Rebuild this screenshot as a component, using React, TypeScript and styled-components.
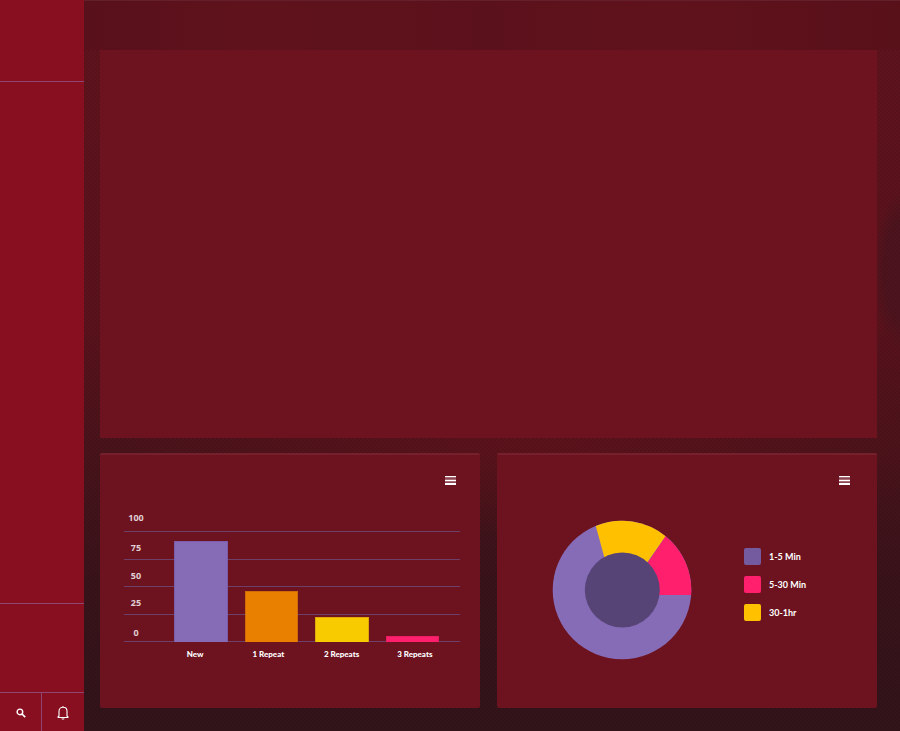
import React from "react";
import styled, { createGlobalStyle } from "styled-components";

const GlobalStyle = createGlobalStyle`
  * { box-sizing: border-box; }
  body {
    margin: 0;
    background: #2c1015;
    color: #fff;
    font-family: Lato, "Open Sans", sans-serif;
  }
`;

const Page = styled.div`
  display: grid;
  grid-template-columns: 84px 1fr;
  min-height: 100vh;
`;

const Sidebar = styled.aside`
  display: flex;
  flex-direction: column;
  background: #870f20;
`;

const Brand = styled.div`
  height: 82px;
  border-bottom: 1px solid #904672;
`;

const Nav = styled.nav`
  flex: 1;
`;

const Account = styled.div`
  height: 89px;
  border-top: 1px solid #904672;
`;

const Tools = styled.div`
  display: grid;
  grid-template-columns: 1fr 1fr;
  height: 39px;
  border-top: 1px solid #904672;
`;

const ToolButton = styled.button`
  display: flex;
  align-items: center;
  justify-content: center;
  padding: 2px 0 0;
  border: 0;
  background: none;
  color: #fff;
  cursor: pointer;

  &:first-child {
    border-right: 1px solid #904672;
  }
`;

const Main = styled.main`
  display: flex;
  flex-direction: column;
  min-width: 0;
  background:
    repeating-conic-gradient(rgba(0, 0, 0, 0.07) 0 25%, transparent 0 50%) 0 0 / 4px 4px,
    radial-gradient(ellipse 26px 80px at 100% 37%, rgba(76, 20, 30, 0.9) 60%, transparent),
    radial-gradient(ellipse 420px 90px at 56% 61%, rgba(98, 18, 27, 0.8), transparent),
    linear-gradient(#60131d 0%, #5a121c 45%, #4a131b 61%, #39131a 80%, #32141a 100%);
`;

const Header = styled.header`
  height: 50px;
  border-top: 1px solid #64202a;
  background: linear-gradient(90deg, #58101a, #5f121c 20%, #5b111b 50%, #60121c 72%, #581019);
`;

const Content = styled.div`
  flex: 1;
  display: flex;
  flex-direction: column;
  gap: 15px;
  padding: 0 23px 23px 16px;
`;

const Panel = styled.section`
  flex: 1;
  min-height: 200px;
  background: #6d1320;
`;

const Cards = styled.div`
  display: grid;
  grid-template-columns: 1fr 1fr;
  gap: 17px;
`;

const Card = styled.section`
  display: flex;
  flex-direction: column;
  min-height: 255px;
  border-top: 2px solid #76202e;
  border-radius: 2px;
  background: #6d1320;
`;

const CardHeader = styled.header<{ $inset: number }>`
  display: flex;
  justify-content: flex-end;
  padding: 21px ${(p) => p.$inset}px 0 0;
`;

const MenuButton = styled.button`
  display: flex;
  padding: 0;
  border: 0;
  background: none;
  color: #fff;
  cursor: pointer;
`;

const BarChart = styled.figure`
  display: grid;
  margin: 26px 20px 0 24px;
`;

const Scale = styled.ol`
  grid-area: 1 / 1;
  margin: 0;
  padding: 0;
  list-style: none;
`;

const ScaleRow = styled.li`
  display: flex;
  align-items: flex-start;
  height: 28px;
  padding-top: 10px;
  border-bottom: 1px solid #6c4068;
  color: #e0cfd4;
  font: 700 9px/12px "Noto Sans", sans-serif;

  &:first-child {
    height: 20px;
    padding-top: 0;
  }
  &:nth-child(odd):not(:first-child) {
    height: 27px;
  }
  &:last-child {
    padding-top: 12px;
  }
`;

const ScaleValue = styled.span`
  width: 24px;
  text-align: center;
`;

const Bars = styled.div`
  grid-area: 1 / 1;
  display: grid;
  grid-template-columns: repeat(4, 1fr);
  column-gap: 17px;
  align-items: end;
  padding: 0 21px 0 50px;
`;

const Bar = styled.div<{ $color: string; $edge: string }>`
  border: 1px solid ${(p) => p.$edge};
  border-bottom: 0;
  background: ${(p) => p.$color};
`;

const BarLabels = styled.figcaption`
  display: grid;
  grid-template-columns: repeat(4, 1fr);
  column-gap: 17px;
  padding: 6px 17px 0 43px;
  font: 900 8px/12px Lato, sans-serif;
  text-align: center;
  white-space: nowrap;
`;

const DonutBody = styled.div`
  display: flex;
  align-items: center;
  padding: 34px 24px 0 55px;
`;

const Donut = styled.svg`
  flex: none;
`;

const Legend = styled.ul`
  display: flex;
  flex-direction: column;
  gap: 11px;
  margin: 0 0 12px 52px;
  padding: 0;
  list-style: none;
`;

const LegendItem = styled.li`
  display: flex;
  align-items: center;
  gap: 8px;
  font: 700 9px/17px Lato, sans-serif;
  white-space: nowrap;
`;

const Swatch = styled.span<{ $color: string }>`
  width: 17px;
  height: 17px;
  border-radius: 2px;
  background: ${(p) => p.$color};
`;

const MenuIcon = () => (
  <svg width="11" height="10" viewBox="0 0 11 10" aria-hidden="true">
    <path d="M0 1h11v7H0z" fill="#a76b75" />
    <path d="M0 0h11v1H0zM0 4h11v1H0zM0 7h11v2H0z" fill="currentColor" />
    <path d="M0 2h11v1H0zM0 6h11v1H0z" fill="#8c4450" />
  </svg>
);

const SearchIcon = () => (
  <svg width="10" height="10" viewBox="0 0 10 10" fill="none" stroke="currentColor" aria-hidden="true">
    <circle cx="3.9" cy="3.9" r="2.8" strokeWidth="1.4" />
    <path d="M6 6l3.2 3.2" strokeWidth="1.7" />
  </svg>
);

const BellIcon = () => (
  <svg width="12" height="14" viewBox="0 0 12 14" fill="none" stroke="currentColor" aria-hidden="true">
    <path d="M2 10.5V5.2C2 2.8 3.7 1.3 6 1.3s4 1.5 4 3.9v5.3M.6 11.5h10.8M2 10l-1.4 1.5M10 10l1.4 1.5M6 0v1.2" strokeWidth="1.1" />
    <path d="M4.4 12.4h3.2c-.2.9-.8 1.2-1.6 1.2s-1.4-.3-1.6-1.2z" fill="currentColor" stroke="none" />
  </svg>
);

const scale = [100, 75, 50, 25, 0];

const bars = [
  { label: "New", height: 101, color: "#866cb7", edge: "#7a5cab" },
  { label: "1 Repeat", height: 51, color: "#e98000", edge: "#cf6c07" },
  { label: "2 Repeats", height: 25, color: "#f8cb00", edge: "#dda808" },
  { label: "3 Repeats", height: 6, color: "#ff1f6c", edge: "#e91d61" },
];

const durations = [
  { label: "1-5 Min", color: "#745a9f" },
  { label: "5-30 Min", color: "#ff1f6c" },
  { label: "30-1hr", color: "#ffc000" },
];

export default function App() {
  return (
    <>
      <GlobalStyle />
      <Page>
        <Sidebar>
          <Brand />
          <Nav aria-label="Main" />
          <Account />
          <Tools>
            <ToolButton type="button" aria-label="Search">
              <SearchIcon />
            </ToolButton>
            <ToolButton type="button" aria-label="Notifications">
              <BellIcon />
            </ToolButton>
          </Tools>
        </Sidebar>
        <Main>
          <Header />
          <Content>
            <Panel />
            <Cards>
              <Card>
                <CardHeader $inset={24}>
                  <MenuButton type="button" aria-label="Repeat chart menu">
                    <MenuIcon />
                  </MenuButton>
                </CardHeader>
                <BarChart>
                  <Scale>
                    {scale.map((value) => (
                      <ScaleRow key={value}>
                        <ScaleValue>{value}</ScaleValue>
                      </ScaleRow>
                    ))}
                  </Scale>
                  <Bars>
                    {bars.map((bar) => (
                      <Bar
                        key={bar.label}
                        $color={bar.color}
                        $edge={bar.edge}
                        style={{ height: bar.height }}
                      />
                    ))}
                  </Bars>
                  <BarLabels>
                    {bars.map((bar) => (
                      <span key={bar.label}>{bar.label}</span>
                    ))}
                  </BarLabels>
                </BarChart>
              </Card>
              <Card>
                <CardHeader $inset={27}>
                  <MenuButton type="button" aria-label="Duration chart menu">
                    <MenuIcon />
                  </MenuButton>
                </CardHeader>
                <DonutBody>
                  <Donut width="140" height="140" viewBox="0 0 140 140" role="img" aria-label="Durations">
                    <circle cx="70" cy="70" r="69.3" fill="#866cb7" />
                    <path d="M55 47L43.8 5.9A69.3 69.3 0 0 1 113.6 16.2L92 47z" fill="#ffc000" />
                    <path d="M70 75L96 42.2L113.6 16.2A69.3 69.3 0 0 1 139.1 75z" fill="#ff1f6c" />
                    <circle cx="70.3" cy="70" r="37.5" fill="#574477" />
                  </Donut>
                  <Legend>
                    {durations.map((item) => (
                      <LegendItem key={item.label}>
                        <Swatch $color={item.color} />
                        {item.label}
                      </LegendItem>
                    ))}
                  </Legend>
                </DonutBody>
              </Card>
            </Cards>
          </Content>
        </Main>
      </Page>
    </>
  );
}
